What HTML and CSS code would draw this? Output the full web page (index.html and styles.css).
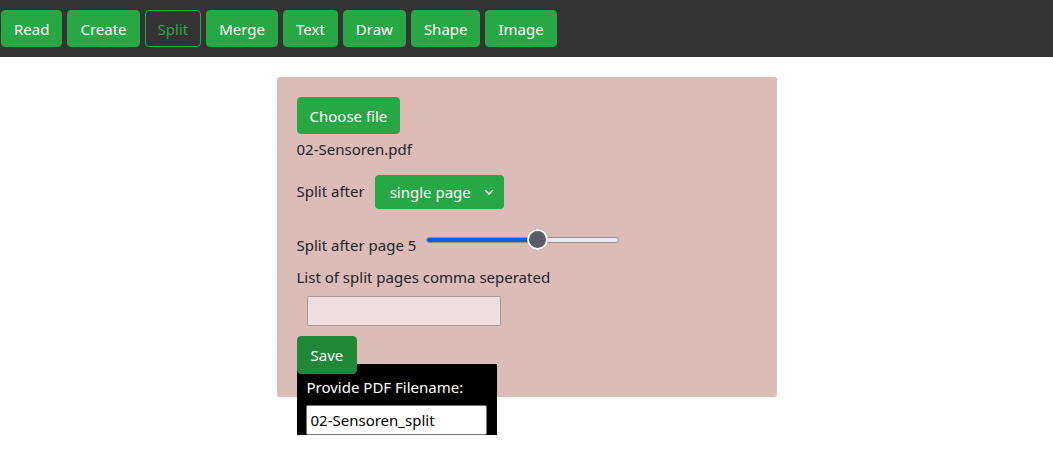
FILE: index.html
```html
<!DOCTYPE html>
<html>
<head>
<meta charset="utf-8">
<link rel="stylesheet" href="styles.css">
</head>
<body>
<nav class="nav">
  <button class="btn">Read</button>
  <button class="btn">Create</button>
  <button class="btn btn-outline">Split</button>
  <button class="btn">Merge</button>
  <button class="btn">Text</button>
  <button class="btn">Draw</button>
  <button class="btn">Shape</button>
  <button class="btn">Image</button>
</nav>
<main class="panel">
  <button class="btn">Choose file</button>
  <div class="filename">02-Sensoren.pdf</div>
  <div class="row split-row">
    <span>Split after</span>
    <div class="select">
      <span>single page</span>
      <svg width="10" height="7" viewBox="0 0 10 7"><path d="M1.5 1.5 L5 5 L8.5 1.5" fill="none" stroke="#fff" stroke-width="1.4" stroke-linecap="round" stroke-linejoin="round"/></svg>
    </div>
  </div>
  <div class="row range-row">
    <span class="range-label">Split after page 5</span>
    <div class="range">
      <div class="track"><div class="fill" style="width:58%"></div></div>
      <div class="thumb" style="left:101px"></div>
    </div>
  </div>
  <div class="list-label">List of split pages comma seperated</div>
  <input class="pages" type="text">
  <button class="btn btn-save">Save</button>
  <div class="popup">
    <div class="popup-label">Provide PDF Filename:</div>
    <div class="popup-input">02-Sensoren_split</div>
  </div>
</main>
</body>
</html>
```
FILE: styles.css
```css
* { box-sizing: border-box; }
html, body {
  min-height: 100%;
  height: 100%;
}
body {
  margin: 0;
  font-family: "Noto Sans", "Open Sans", sans-serif;
  font-size: 15px;
  color: #212529;
  background: #fff;
}
.nav {
  background: #333333;
  height: 57px;
  display: flex;
  align-items: flex-start;
  gap: 5px;
  padding: 10px 0 0 1px;
}
.btn {
  font-family: inherit;
  font-size: 15px;
  line-height: 24px;
  height: 37px;
  padding: 0 12px;
  border: 1px solid #28a745;
  border-radius: 4px;
  background: #28a745;
  color: #fff;
  cursor: pointer;
}
.btn-outline {
  background: transparent;
  color: #28a745;
}
.panel {
  position: relative;
  width: 500px;
  margin: 20px auto 0;
  background: #dbbcb6;
  border-radius: 3px;
  padding: 20px 20px 0;
  height: 320px;
}
.filename {
  margin-top: 3px;
  line-height: 24px;
}
.row {
  display: flex;
  align-items: center;
}
.split-row {
  margin-top: 12px;
  gap: 10px;
}
.select {
  width: 129px;
  height: 34px;
  background: #28a745;
  color: #fff;
  border-radius: 4px;
  display: flex;
  align-items: center;
  justify-content: space-between;
  padding: 0 10px 0 15px;
  margin-top: 2px;
}
.range-row {
  margin-top: 23px;
  align-items: flex-start;
  gap: 10px;
}
.range-label {
  line-height: 24px;
  padding-top: 1px;
}
.range {
  position: relative;
  width: 193px;
  height: 21px;
  margin-top: -3px;
  display: flex;
  align-items: center;
}
.track {
  width: 100%;
  height: 6px;
  border-radius: 3px;
  background: #e9e9ed;
  border: 1px solid #8f8f9d;
  overflow: hidden;
  display: flex;
}
.fill {
  background: #0060df;
  height: 100%;
}
.thumb {
  position: absolute;
  top: 0;
  width: 21px;
  height: 21px;
  border-radius: 50%;
  background: #5c5c66;
  border: 2px solid #fff;
  box-shadow: 0 0 1px rgba(0,0,0,.4);
}
.list-label {
  margin-top: 8px;
  line-height: 24px;
}
.pages {
  display: block;
  margin: 7px 0 10px 10px;
  width: 194px;
  height: 30px;
  background: #eedfdc;
  border: 1px solid #a99a98;
  border-radius: 1px;
}
.btn-save {
  position: relative;
  z-index: 2;
  background: #218838;
  border-color: #218838;
  height: 38px;
  padding: 0 13px;
}
.popup {
  position: absolute;
  z-index: 1;
  left: 20px;
  top: 287px;
  width: 200px;
  height: 71px;
  background: #000;
  color: #fff;
  padding: 11px 10px 0;
}
.popup-label {
  line-height: 24px;
}
.popup-input {
  margin: 6px 0 0 -1px;
  width: 181px;
  height: 30px;
  line-height: 28px;
  color: #000;
  padding: 0 4px;
  border: 1px solid #767676;
  border-radius: 2px;
  background: #fff;
}
```
